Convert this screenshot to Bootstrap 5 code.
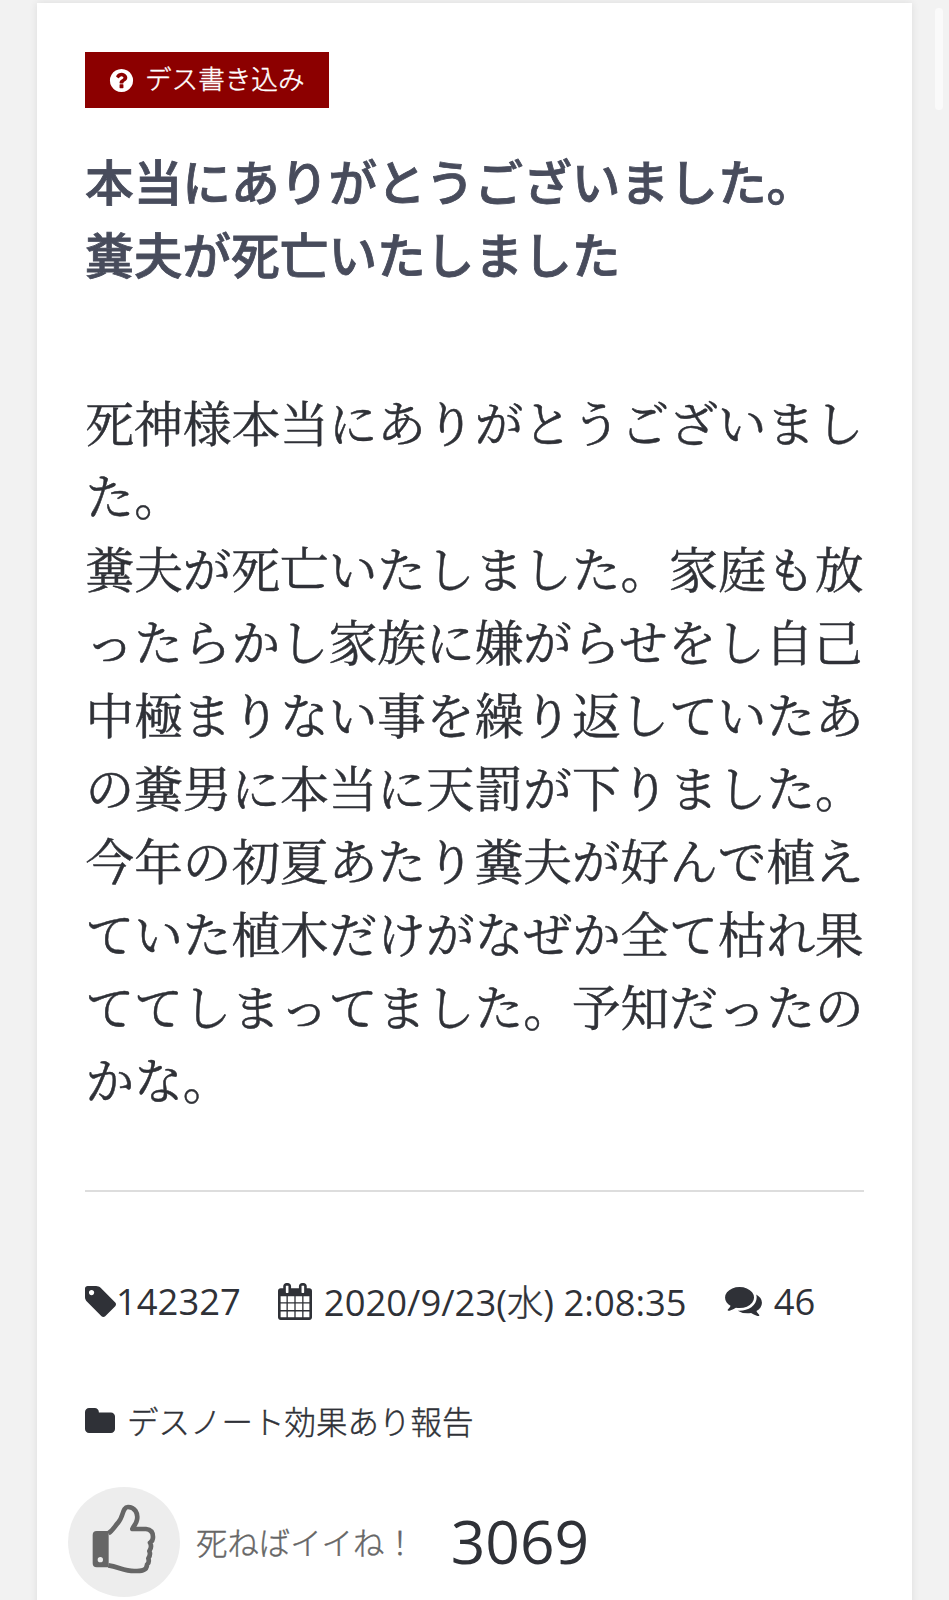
<!DOCTYPE html>
<html lang="ja">
<head>
<meta charset="utf-8">
<meta name="viewport" content="width=device-width, initial-scale=1">
<title>デス書き込み</title>
<link href="https://cdn.jsdelivr.net/npm/bootstrap@5.3.0/dist/css/bootstrap.min.css" rel="stylesheet">
<style>
html{overflow:hidden}
body{background:#f2f2f2;color:#2f3137;font-family:"Open Sans","Noto Sans CJK JP",sans-serif;height:1600px;overflow:hidden}
.post{width:875px;margin:3px 0 0 37px;padding:49px 48px 0;height:1640px;box-shadow:0 0 8px rgba(0,0,0,.09)}
.post svg{fill:currentColor;flex:none}
.jp-light{font-family:"Noto Sans CJK JP",sans-serif;font-weight:300;-webkit-text-stroke:.4px currentColor;white-space:nowrap}
.tag-btn{background:#8c0000;width:244px;height:56px;padding-left:22px;font-size:26.6px;line-height:56px}
.tag-btn svg{margin-left:1px}
.tag-btn span{margin:-4px 0 0 10px}
.headline{font:500 48.7px/73px "Noto Sans CJK JP",sans-serif;-webkit-text-stroke:.8px currentColor;color:#484c5c;margin:36px 0 0;white-space:nowrap}
.story{font:400 48.65px/73px "Noto Serif CJK JP","Noto Serif JP","Noto Sans CJK JP",serif;-webkit-text-stroke:.5px currentColor;margin:95px 0 0 .5px;white-space:nowrap}
.rule{height:2px;background:#ddd;margin-top:75px}
.meta{height:60px;margin-top:79px;font-size:36.4px;font-weight:370;line-height:60px;white-space:nowrap}
.m-cal{margin-left:37px}
.folder-row{height:50px;margin-top:64px;font-size:31.5px;line-height:50px}
.like{margin:42px 0 0 -17px;height:110px}
.like-text{font-size:31.4px;color:#666;margin-left:16px}
.like-num{font-size:60.5px;font-weight:370;line-height:80px;margin:-2px 0 0 35px}
.scroll-thumb{position:absolute;right:6px;top:8px;width:8px;height:102px;background:#fafafa}
</style>
</head>
<body>
<article class="post bg-white">
  <a class="tag-btn d-flex align-items-center text-white text-decoration-none jp-light">
    <svg width="27" height="27" viewBox="0 0 1792 1792"><path d="M1024 1376v-192q0-14-9-23t-23-9h-192q-14 0-23 9t-9 23v192q0 14 9 23t23 9h192q14 0 23-9t9-23zm256-672q0-88-55.5-163t-138.5-116-170-41q-243 0-371 213-15 24 8 42l132 100q7 6 19 6 16 0 25-12 53-68 86-92 34-24 86-24 48 0 85.5 26t37.5 59q0 38-20 61t-68 45q-63 28-115.5 86.5t-52.5 125.5v36q0 14 9 23t23 9h192q14 0 23-9t9-23q0-19 21.5-49.5t54.5-49.5q32-18 49-28.5t46-35 44.5-48 28-60.5 12.5-81zm384 192q0 209-103 385.5t-279.5 279.5-385.5 103-385.5-103-279.5-279.5-103-385.5 103-385.5 279.5-279.5 385.5-103 385.5 103 279.5 279.5 103 385.5z"/></svg>
    <span>デス書き込み</span>
  </a>
  <h1 class="headline">本当にありがとうございました。<br>糞夫が死亡いたしました</h1>
  <p class="story">死神様本当にありがとうございまし<br>た。<br>糞夫が死亡いたしました。家庭も放<br>ったらかし家族に嫌がらせをし自己<br>中極まりない事を繰り返していたあ<br>の糞男に本当に天罰が下りました。<br>今年の初夏あたり糞夫が好んで植え<br>ていた植木だけがなぜか全て枯れ果<br>ててしまってました。予知だったの<br>かな。</p>
  <div class="rule"></div>
  <div class="meta d-flex align-items-center">
    <svg width="31" height="31" viewBox="128 128 1515 1515"><path d="M576 448q0-53-37.5-90.5t-90.5-37.5-90.5 37.5-37.5 90.5 37.5 90.5 90.5 37.5 90.5-37.5 37.5-90.5zm1067 576q0 53-37 90l-491 492q-39 37-91 37-53 0-90-37l-715-716q-38-37-64.5-101t-26.5-117v-416q0-52 38-90t90-38h416q53 0 117 26.5t102 64.5l715 714q37 39 37 91z"/></svg>
    <span>142327</span>
    <svg class="m-cal" width="34" height="37" viewBox="64 0 1664 1792" preserveAspectRatio="none"><path d="M192 1664h288v-288h-288v288zm352 0h320v-288h-320v288zm-352-352h288v-320h-288v320zm352 0h320v-320h-320v320zm-352-384h288v-288h-288v288zm736 736h320v-288h-320v288zm-384-736h320v-288h-320v288zm768 736h288v-288h-288v288zm-384-352h320v-320h-320v320zm-352-864v-288q0-13-9.5-22.5t-22.5-9.5h-64q-13 0-22.5 9.5t-9.5 22.5v288q0 13 9.5 22.5t22.5 9.5h64q13 0 22.5-9.5t9.5-22.5zm736 864h288v-320h-288v320zm-384-384h320v-288h-320v288zm384 0h288v-288h-288v288zm32-480v-288q0-13-9.5-22.5t-22.5-9.5h-64q-13 0-22.5 9.5t-9.5 22.5v288q0 13 9.5 22.5t22.5 9.5h64q13 0 22.5-9.5t9.5-22.5zm384-64v1280q0 52-38 90t-90 38h-1408q-52 0-90-38t-38-90v-1280q0-52 38-90t90-38h128v-96q0-66 47-113t113-47h64q66 0 113 47t47 113v96h384v-96q0-66 47-113t113-47h64q66 0 113 47t47 113v96h128q52 0 90 38t38 90z"/></svg>
    <span style="margin-left:12px">2020/9/23(<span class="jp-light">水</span>) 2:08:35</span>
    <svg style="margin-left:38px" width="37" height="29" viewBox="0 256 1792 1408"><path d="M1408 768q0 139-94 257t-256.5 186.5-353.5 68.5q-86 0-176-16-124 88-278 128-36 9-86 16h-3q-11 0-20.500-8t-11.500-21q-1-3-1-6.500t.5-6.500 2-6l2.500-5 3.500-5.500 4-5 4.500-5 4-4.500q5-6 23-25t26-29.500 22.500-29 25-38.500 20.500-44q-124-72-195-177t-71-224q0-139 94-257t256.500-186.500 353.500-68.500 353.500 68.500 256.500 186.500 94 257zm384 256q0 120-71 224.500t-195 176.500q10 24 20.500 44t25 38.500 22.500 29 26 29.500 23 25q1 1 4 4.500t4.500 5 4 5 3.500 5.500l2.500 5 2 6 .5 6.500-1 6.500q-3 14-13 22t-22 7q-50-7-86-16-154-40-278-128-90 16-176 16-271 0-472-132 58 4 88 4 161 0 309-45t264-129q125-92 192-212t67-254q0-77-23-152 129 71 204 178t75 230z"/></svg>
    <span style="margin-left:12px">46</span>
  </div>
  <div class="folder-row d-flex align-items-center jp-light">
    <svg width="30" height="25" viewBox="64 128 1664 1408" preserveAspectRatio="none"><path d="M1728 608v704q0 92-66 158t-158 66h-1216q-92 0-158-66t-66-158v-960q0-92 66-158t158-66h320q92 0 158 66t66 158v32h672q92 0 158 66t66 158z"/></svg>
    <span style="margin-left:12px">デスノート効果あり報告</span>
  </div>
  <div class="like d-flex align-items-center">
    <svg width="112" height="110" viewBox="54 288 336 330">
      <ellipse cx="222" cy="453" rx="168" ry="165" fill="#ededed"/>
      <path d="M175 427C188 419 194 406 205 394C221 376 217 348 234 348C254 348 265 366 261 386C259 399 250 405 247 414H288Q309 416 309 438Q309 450 300 455Q307 467 298 480Q303 491 295 502Q299 515 291 521C291 540 271 540 253 540C222 540 207 528 175 523" fill="none" stroke="#666" stroke-width="14" stroke-linejoin="round"/>
      <path fill="#666" fill-rule="evenodd" d="M140 420H176V529H140Q128 529 128 517V432Q128 420 140 420ZM151 498A8 8 0 1 0 151 514A8 8 0 1 0 151 498Z"/>
    </svg>
    <span class="like-text jp-light">死ねばイイね！</span>
    <span class="like-num">3069</span>
  </div>
</article>
<div class="scroll-thumb rounded-pill"></div>
</body>
</html>
